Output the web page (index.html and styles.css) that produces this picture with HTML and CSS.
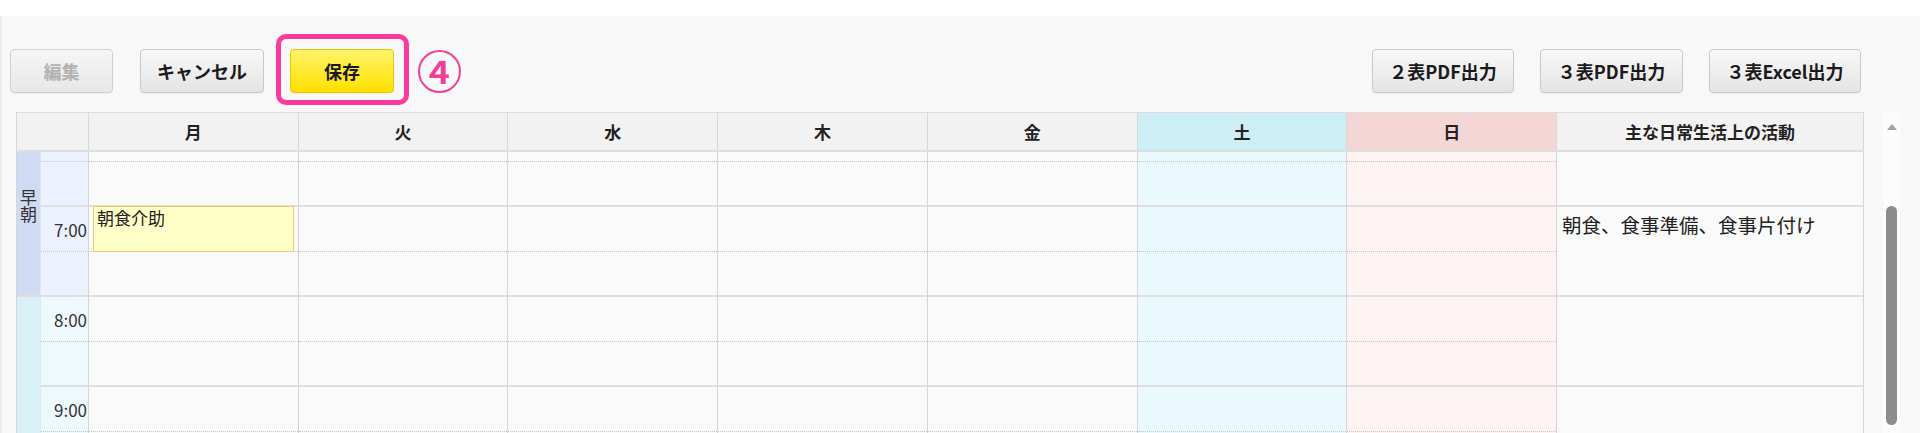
FILE: index.html
```html
<!DOCTYPE html>
<html lang="ja">
<head>
<meta charset="utf-8">
<title>週間スケジュール</title>
<link rel="stylesheet" href="styles.css">
</head>
<body>
<div class="topbar"></div>
<div class="main">
  <div class="toolbar">
    <div class="btn-group left">
      <button class="btn btn-edit" disabled>編集</button>
      <button class="btn btn-cancel">キャンセル</button>
      <div class="save-wrap"><button class="btn btn-save">保存</button></div>
      <span class="step"><span class="step-num">4</span></span>
    </div>
    <div class="btn-group right">
      <button class="btn btn-pdf2">２表PDF出力</button>
      <button class="btn btn-pdf3">３表PDF出力</button>
      <button class="btn btn-excel">３表Excel出力</button>
    </div>
  </div>

  <div class="schedule">
    <div class="table">
      <div class="thead">
        <div class="th"></div>
        <div class="th">月</div>
        <div class="th">火</div>
        <div class="th">水</div>
        <div class="th">木</div>
        <div class="th">金</div>
        <div class="th sat">土</div>
        <div class="th sun">日</div>
        <div class="th">主な日常生活上の活動</div>
      </div>
      <div class="tbody-view">
        <div class="tbody">
          <div class="col col-period">
            <div class="period early"><span class="period-label">早朝</span></div>
            <div class="period morning"></div>
          </div>
          <div class="col col-time">
            <div class="h t-early"></div>
            <div class="h hr t-early"></div>
            <div class="h t-early">7:00</div>
            <div class="h hr t-early"></div>
            <div class="h t-morning">8:00</div>
            <div class="h hr t-morning"></div>
            <div class="h t-morning">9:00</div>
            <div class="h hr t-morning"></div>
          </div>
          <div class="col day">
            <div class="h"></div><div class="h hr"></div>
            <div class="h has-event"><div class="event">朝食介助</div></div><div class="h hr"></div>
            <div class="h"></div><div class="h hr"></div>
            <div class="h"></div><div class="h hr"></div>
          </div>
          <div class="col day">
            <div class="h"></div><div class="h hr"></div>
            <div class="h"></div><div class="h hr"></div>
            <div class="h"></div><div class="h hr"></div>
            <div class="h"></div><div class="h hr"></div>
          </div>
          <div class="col day">
            <div class="h"></div><div class="h hr"></div>
            <div class="h"></div><div class="h hr"></div>
            <div class="h"></div><div class="h hr"></div>
            <div class="h"></div><div class="h hr"></div>
          </div>
          <div class="col day">
            <div class="h"></div><div class="h hr"></div>
            <div class="h"></div><div class="h hr"></div>
            <div class="h"></div><div class="h hr"></div>
            <div class="h"></div><div class="h hr"></div>
          </div>
          <div class="col day">
            <div class="h"></div><div class="h hr"></div>
            <div class="h"></div><div class="h hr"></div>
            <div class="h"></div><div class="h hr"></div>
            <div class="h"></div><div class="h hr"></div>
          </div>
          <div class="col day sat">
            <div class="h"></div><div class="h hr"></div>
            <div class="h"></div><div class="h hr"></div>
            <div class="h"></div><div class="h hr"></div>
            <div class="h"></div><div class="h hr"></div>
          </div>
          <div class="col day sun">
            <div class="h"></div><div class="h hr"></div>
            <div class="h"></div><div class="h hr"></div>
            <div class="h"></div><div class="h hr"></div>
            <div class="h"></div><div class="h hr"></div>
          </div>
          <div class="col col-activity">
            <div class="hour"></div>
            <div class="hour">朝食、食事準備、食事片付け</div>
            <div class="hour"></div>
            <div class="hour"></div>
          </div>
        </div>
      </div>
    </div>
    <div class="scrollbar">
      <div class="arrow-up"></div>
      <div class="thumb"></div>
    </div>
  </div>
</div>
</body>
</html>
```

FILE: styles.css
```css
* { box-sizing: border-box; }

html, body {
  margin: 0;
  height: 433px;
  overflow: hidden;
}

body {
  font-family: "Noto Sans CJK JP", "Noto Sans", sans-serif;
  background: #f8f8f8;
  color: #222;
}

.topbar {
  height: 16px;
  background: #ffffff;
}

.main {
  height: 417px;
  display: flex;
  flex-direction: column;
  box-shadow: inset 2px 0 0 #ebebeb;
}

/* toolbar */
.toolbar {
  display: flex;
  justify-content: space-between;
  align-items: flex-start;
  padding: 33px 59px 0 10px;
  height: 77px;
  flex: none;
}

.btn-group {
  display: flex;
  align-items: center;
}

.btn {
  height: 44px;
  padding: 0;
  border: 1px solid #c9c9c9;
  border-radius: 4px;
  background: linear-gradient(#f9f9f9, #e4e4e4);
  font-family: "Noto Sans CJK JP", "Noto Sans", sans-serif;
  font-weight: 700;
  font-size: 18px;
  line-height: 1;
  color: #1a1a1a;
  display: flex;
  align-items: center;
  justify-content: center;
  box-shadow: 0 1px 1px rgba(0,0,0,0.04);
}

.btn-edit {
  width: 103px;
  color: #b1b1b1;
  background: linear-gradient(#f6f6f6, #e7e7e7);
  border-color: #d0d0d0;
}
.btn-cancel { width: 124px; margin-left: 27px; }
.save-wrap {
  position: relative;
  margin-left: 26px;
}
.save-wrap::after {
  content: "";
  position: absolute;
  left: -14px;
  right: -15px;
  top: -15px;
  bottom: -12px;
  border: 5px solid #fb3a9c;
  border-radius: 10px;
  pointer-events: none;
}
.btn-save {
  width: 104px;
  background: linear-gradient(#fff36a, #ffe000);
  border-color: #e3c900;
}

.step {
  margin-left: 24px;
  width: 43px;
  height: 43px;
  border: 2px solid #f0409a;
  border-radius: 50%;
  display: flex;
  align-items: center;
  justify-content: center;
  color: #f0409a;
}
.step-num {
  font-size: 31px;
  font-weight: 700;
  line-height: 1;
  transform: scaleX(1.15);
  margin-top: -1px;
}

.btn-pdf2 { width: 142px; }
.btn-pdf3 { width: 143px; margin-left: 26px; }
.btn-excel { width: 152px; margin-left: 26px; }

/* schedule */
.schedule {
  margin: 19px 20px 0 16px;
  flex: 1;
  min-height: 0;
  display: flex;
  justify-content: space-between;
}

.table {
  width: 1848px;
  border-left: 1px solid #d6d6d6;
  display: flex;
  flex-direction: column;
}

.thead {
  display: grid;
  grid-template-columns: 72px repeat(7, 1fr) 307px;
  height: 40px;
  border-top: 1px solid #dcdcdc;
  border-bottom: 2px solid #dedede;
  flex: none;
}

.th {
  background: #f2f2f2;
  border-right: 1px solid #d8d8d8;
  display: flex;
  align-items: center;
  justify-content: center;
  font-size: 17px;
  font-weight: 700;
  color: #222;
}
.th.sat { background: #cdeef4; }
.th.sun { background: #f5d6d7; }

.tbody-view {
  flex: 1;
  min-height: 0;
  overflow: hidden;
}

.tbody {
  display: grid;
  grid-template-columns: 24px 48px repeat(7, 1fr) 307px;
  margin-top: -35px;
}

.col {
  display: flex;
  flex-direction: column;
  min-width: 0;
  border-right: 1px solid #d6d6d6;
  background: #fafafa;
}
.col.sat { background: #eaf9fd; }
.col.sun { background: #fdf3f2; }

.h {
  height: 45px;
  border-bottom: 1px dotted #c6c6c6;
}
.h.hr {
  border-bottom: 2px solid #dedede;
}

.col-period {
  border-right: 1px solid #e2e6ee;
}
.period {
  display: flex;
  align-items: center;
  justify-content: center;
}
.period.early {
  height: 180px;
  background: #cfdaf3;
  border-bottom: 2px solid #dedede;
}
.period.morning {
  height: 180px;
  background: #d9f0f6;
}
.period-label {
  writing-mode: vertical-rl;
  font-size: 17px;
  line-height: 1;
  color: #333;
  letter-spacing: 0;
}

.col-time .h {
  display: flex;
  align-items: center;
  justify-content: flex-end;
  padding-right: 1px;
  font-size: 17px;
  color: #333;
}
.t-early { background: #ebf1fe; }
.t-morning { background: #eef9fe; }

.has-event { position: relative; }
.event {
  position: absolute;
  top: -1px;
  left: 4px;
  right: 4px;
  bottom: -1px;
  background: #ffffc8;
  border: 1px solid #f6c96c;
  padding: 0 3px;
  font-size: 17px;
  line-height: 1.3;
  color: #222;
}

.hour {
  height: 90px;
  border-bottom: 2px solid #dedede;
  padding: 3px 5px;
  font-size: 19.5px;
  line-height: 1.5;
  color: #222;
}

/* scrollbar */
.scrollbar {
  width: 17px;
  background: #fcfcfc;
  display: flex;
  flex-direction: column;
  align-items: center;
  padding-top: 12px;
}
.arrow-up {
  width: 0;
  height: 0;
  border-left: 5px solid transparent;
  border-right: 5px solid transparent;
  border-bottom: 6px solid #a3a3a3;
}
.thumb {
  margin-top: 76px;
  width: 11px;
  height: 219px;
  border-radius: 6px;
  background: #8c8c8c;
}
```
